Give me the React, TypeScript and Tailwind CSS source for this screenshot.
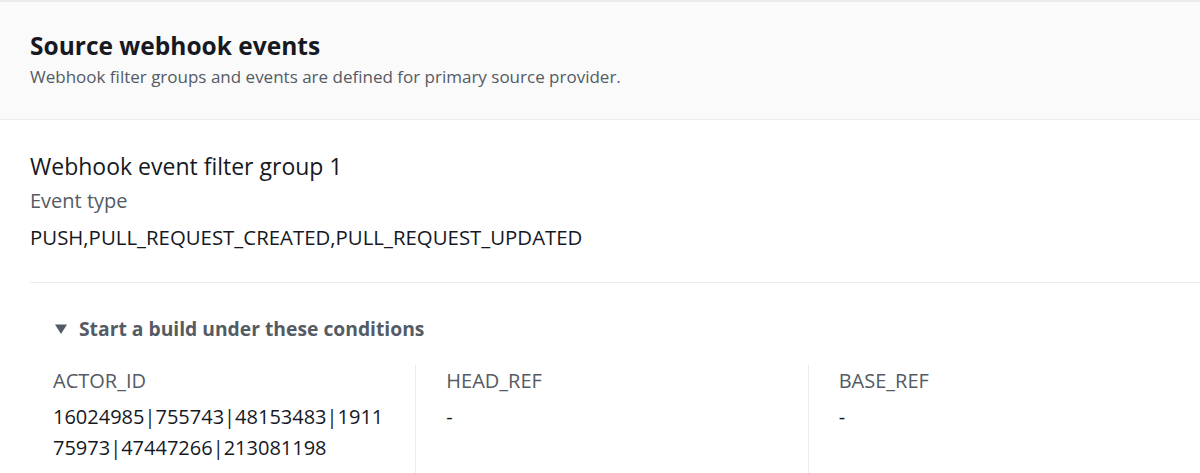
export default function App() {
  return (
    <div className="w-[1200px] h-[473px] overflow-hidden bg-white text-[#16191f]" style={{ fontFamily: '"Open Sans", Arial, sans-serif' }}>
      <div className="border-t-2 border-b border-[#e9ebed] bg-[#fafafa] h-[120px] px-[30px] pt-[28px]">
        <h2 className="text-[24.5px] font-bold leading-[32px] text-[#16191f]">Source webhook events</h2>
        <p className="mt-[3px] text-[17px] leading-[24px] text-[#545b64]">
          Webhook filter groups and events are defined for primary source provider.
        </p>
      </div>

      <div className="pl-[30px] pt-[31px]">
        <div className="text-[23px] leading-[30px]">Webhook event filter group 1</div>
        <div className="mt-[7px] text-[20px] leading-[26px] text-[#545b64]">Event type</div>
        <div className="mt-[10px] text-[20.4px] leading-[26px]">PUSH,PULL_REQUEST_CREATED,PULL_REQUEST_UPDATED</div>
        <div className="mt-[32px] border-t border-[#e9ebed]" />

        <div className="flex items-center gap-[12px] pl-[25px] pt-[33px]">
          <svg width="12" height="10" viewBox="0 0 12 10" className="text-[#545b64]">
            <path d="M0 0.5h12L6 10z" fill="currentColor" />
          </svg>
          <span className="text-[19.3px] font-bold leading-[26px] text-[#545b64]">Start a build under these conditions</span>
        </div>

        <div className="ml-[-7px] mt-[23px] grid grid-cols-3">
          <div className="pl-[30px] pt-[3px]">
            <div className="text-[20px] leading-[26px] text-[#545b64]">ACTOR_ID</div>
            <div className="mt-[7px] max-w-[338px] text-[20px] leading-[31px] break-all">16024985|755743|48153483|191175973|47447266|213081198</div>
          </div>
          <div className="border-l border-[#e9ebed] pl-[30px] pt-[3px] h-[120px]">
            <div className="text-[20px] leading-[26px] text-[#545b64]">HEAD_REF</div>
            <div className="mt-[7px] text-[20px] leading-[31px]">-</div>
          </div>
          <div className="border-l border-[#e9ebed] pl-[30px] pt-[3px] h-[120px]">
            <div className="text-[20px] leading-[26px] text-[#545b64]">BASE_REF</div>
            <div className="mt-[7px] text-[20px] leading-[31px]">-</div>
          </div>
        </div>
      </div>
    </div>
  );
}
